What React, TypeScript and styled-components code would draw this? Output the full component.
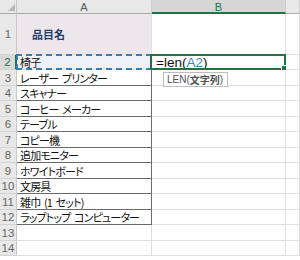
import React from 'react';
import styled, { createGlobalStyle } from 'styled-components';

const GlobalStyle = createGlobalStyle`
  body {
    margin: 0;
    background: #ffffff;
  }
`

const Sheet = styled.div`
  display: grid;
  grid-template-columns: 17px 135px 134px 1fr;
  grid-template-rows: 14px 40.5px repeat(14, 15.5px);
  width: 300px;
  height: 260px;
  overflow: hidden;
  background: #ffffff;
  font-family: "Noto Sans CJK JP", "Liberation Sans", sans-serif;
`

const Corner = styled.div`
  position: relative;
  background: #e8e8e8;
  border-right: 1px solid #c8c8c8;
  border-bottom: 1px solid #ababab;
  box-sizing: border-box;

  &::after {
    content: '';
    position: absolute;
    right: 1px;
    bottom: 2px;
    border-style: solid;
    border-width: 0 0 7px 7px;
    border-color: transparent transparent #b6b6b6 transparent;
  }
`

const ColHeader = styled.div<{ $active?: boolean }>`
  display: flex;
  align-items: center;
  justify-content: center;
  box-sizing: border-box;
  background: ${p => (p.$active ? '#d6d6d6' : '#e8e8e8')};
  border-right: 1px solid #cfcfcf;
  border-bottom: ${p => (p.$active ? '2px solid #217346' : '1px solid #ababab')};
  color: ${p => (p.$active ? '#217346' : '#555555')};
  font-family: "Liberation Sans", sans-serif;
  font-size: 11px;
  padding-top: ${p => (p.$active ? '1px' : '0')};
`

const RowHeader = styled.div<{ $active?: boolean }>`
  display: flex;
  align-items: center;
  justify-content: center;
  box-sizing: border-box;
  padding-top: 1px;
  background: ${p => (p.$active ? '#d9d9d9' : '#e8e8e8')};
  border-right: ${p => (p.$active ? '2px solid #217346' : '1px solid #c8c8c8')};
  border-bottom: 1px solid #d4d4d4;
  color: ${p => (p.$active ? '#217346' : '#666666')};
  font-family: "Liberation Sans", sans-serif;
  font-size: 11.5px;
`

const Cell = styled.div<{ $table?: boolean; $fill?: string }>`
  position: relative;
  display: flex;
  align-items: center;
  box-sizing: border-box;
  padding: 1px 2px 0 3px;
  white-space: pre;
  background: ${p => p.$fill || '#ffffff'};
  border-right: 1px solid ${p => (p.$table ? '#6a6a6a' : '#e2dde2')};
  border-bottom: 1px solid ${p => (p.$table ? '#6a6a6a' : '#e2dde2')};
  color: #111111;
  font-size: 11px;
  letter-spacing: -0.85px;
  word-spacing: 2px;
  font-feature-settings: "palt";
`

const Title = styled.span`
  padding-left: 12px;
  color: #1f3d66;
  font-weight: 700;
  font-size: 11px;
  letter-spacing: 0;
  font-feature-settings: "palt";
`

const CopyMarquee = styled.div`
  position: absolute;
  inset: -1px -1px -1px -1px;
  border: 2px dashed #3a7caa;
  pointer-events: none;
`

const ActiveBorder = styled.div`
  position: absolute;
  inset: -1px -1px -1px -2px;
  border: 2px solid #217346;
  pointer-events: none;

  &::after {
    content: '';
    position: absolute;
    right: -3px;
    bottom: -3px;
    width: 4px;
    height: 4px;
    background: #217346;
    border: 1px solid #ffffff;
  }
`

const Formula = styled.span`
  font-family: "Liberation Sans", sans-serif;
  font-size: 13.5px;
  letter-spacing: 0;
  word-spacing: 0;
  color: #111111;
  padding-left: 1px;
`

const Ref = styled.span`
  color: #3d7fd6;
`

const Hint = styled.div`
  position: absolute;
  left: 11px;
  top: 17px;
  z-index: 2;
  display: flex;
  align-items: center;
  height: 13px;
  padding: 0 4px 0 3px;
  background: #ffffff;
  border: 1px solid #bdbdbd;
  color: #505050;
  font-family: "Liberation Sans", "Noto Sans CJK JP", sans-serif;
  font-size: 10px;
  letter-spacing: 0;
  word-spacing: 0;
  white-space: nowrap;

  b {
    font-family: "Noto Sans CJK JP", sans-serif;
    font-weight: 700;
  }
`

const items = [
  'レーザー プリンター',
  'スキャナー',
  'コーヒー メーカー',
  'テーブル',
  'コピー機',
  '追加モニター',
  'ホワイトボード',
  '文房具',
  '雑巾 (1 セット)',
  'ラップトップ コンピューター',
];

export default function App() {
  return (
    <>
      <GlobalStyle />
      <Sheet>
        <Corner />
        <ColHeader>A</ColHeader>
        <ColHeader $active>B</ColHeader>
        <ColHeader />

        <RowHeader>1</RowHeader>
        <Cell $fill="#ebe7eb">
          <Title>品目名</Title>
        </Cell>
        <Cell />
        <Cell />

        <RowHeader $active>2</RowHeader>
        <Cell $fill="#eef2f7">
          椅子
          <CopyMarquee />
        </Cell>
        <Cell>
          <Formula>=len(<Ref>A2</Ref>)</Formula>
          <ActiveBorder />
          <Hint>LEN(<b>文字列</b>)</Hint>
        </Cell>
        <Cell />

        {items.map((name, i) => (
          <React.Fragment key={name}>
            <RowHeader>{i + 3}</RowHeader>
            <Cell $table>{name}</Cell>
            <Cell />
            <Cell />
          </React.Fragment>
        ))}

        {[13, 14].map(n => (
          <React.Fragment key={n}>
            <RowHeader>{n}</RowHeader>
            <Cell />
            <Cell />
            <Cell />
          </React.Fragment>
        ))}
      </Sheet>
    </>
  );
}
